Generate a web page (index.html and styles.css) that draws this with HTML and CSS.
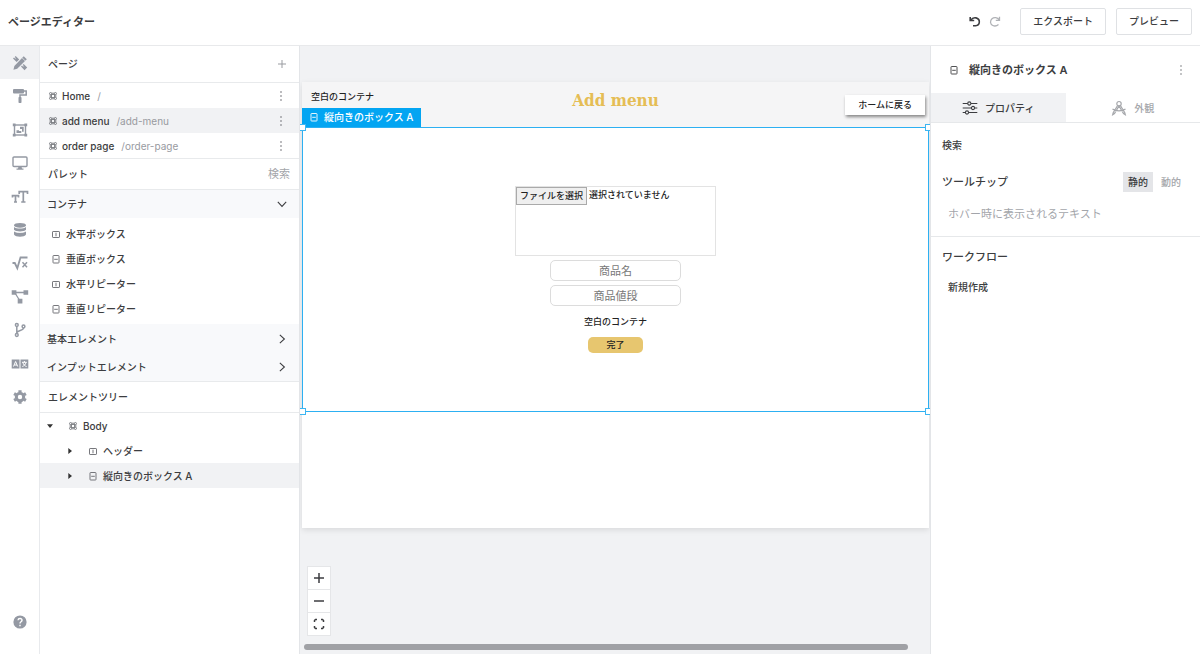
FILE: index.html
```html
<!DOCTYPE html>
<html lang="ja">
<head>
<meta charset="utf-8">
<title>ページエディター</title>
<link rel="stylesheet" href="styles.css">
</head>
<body>
<svg class="sprite" aria-hidden="true">
  <symbol id="i-page" viewBox="0 0 10 10"><g fill="none" stroke="currentColor" stroke-width=".8"><circle cx="2.600" cy="2.600" r="1.100"/><circle cx="7.400" cy="2.600" r="1.100"/><circle cx="2.600" cy="7.400" r="1.100"/><circle cx="7.400" cy="7.400" r="1.100"/><path d="M3.700 2.200h2.600M3.700 7.800h2.600M2.200 3.700v2.600M7.800 3.700v2.600M3.500 3.500h3v3h-3z"/></g></symbol>
  <symbol id="i-hbox" viewBox="0 0 10 10"><g fill="none" stroke="currentColor" stroke-width=".9"><rect x="1.500" y="2.500" width="7" height="6" rx=".6"/><path d="M5 3.700v3.600"/></g></symbol>
  <symbol id="i-vbox" viewBox="0 0 10 10"><g fill="none" stroke="currentColor" stroke-width=".9"><rect x="2" y="1.500" width="6" height="7.500" rx=".6"/><path d="M3.200 5.300h3.600"/></g></symbol>
  <symbol id="i-dots" viewBox="0 0 4 12"><g fill="currentColor"><circle cx="2" cy="2" r=".8"/><circle cx="2" cy="6" r=".8"/><circle cx="2" cy="10" r=".8"/></g></symbol>
  <symbol id="i-right" viewBox="0 0 10 10"><path d="M3.200 1.500L7 5 3.200 8.500" fill="none" stroke="currentColor" stroke-width=".9"/></symbol>
  <symbol id="i-down" viewBox="0 0 10 10"><path d="M1.500 3.200L5 7l3.500-3.800" fill="none" stroke="currentColor" stroke-width=".9"/></symbol>
</svg>

<header class="topbar">
  <h1 class="topbar-title">ページエディター</h1>
  <div class="history">
    <button class="plain undo" aria-label="元に戻す"><svg class="icon-12" viewBox="0 0 12 12"><path d="M1.200 1v3.500h4M1.800 4.200C3 2.200 5 1.600 7 1.900c4.500 1 4.500 7.300-.4 7.900H4" fill="none" stroke="currentColor" stroke-width="1.600"/></svg></button>
    <button class="plain redo" aria-label="やり直す"><svg class="icon-12" viewBox="0 0 12 12"><path d="M10.500 .8v3.500H6.800M10.300 4C8.500 1.200 5 1 3 2.800 .6 5 1.200 8.300 3.800 9.500c2 .9 4 .5 5.700-.9" fill="none" stroke="currentColor" stroke-width="1.300"/></svg></button>
  </div>
  <button class="outline">エクスポート</button>
  <button class="outline">プレビュー</button>
</header>

<div class="workspace">
  <nav class="rail">
    <div class="rail-list">
      <button class="plain rail-item active" aria-label="デザイン"><svg class="icon-16" viewBox="0 0 16 16" fill="currentColor"><path d="M11.700 1.200l3.100 3.100-9.600 9.500-3.800 1 1-3.900z"/><path d="M3.700 1l3.500 3.500-2.600 2.600L1 3.600l1-1 1.300 1.200.6-.6L2.700 2z"/><path d="M11.700 9l3.500 3.500-2.700 2.700L9 11.600l1-1 1.100 1.100.7-.7-1.100-1z"/><path d="M10 2.700l3.300 3.300" stroke="#f1f2f4" stroke-width=".7"/></svg></button>
      <button class="plain rail-item" aria-label="テーマ"><svg class="icon-16" viewBox="0 0 16 16"><rect x="1" y="1" width="11" height="4.500" rx="1" fill="currentColor"/><path d="M12 3h2.200v4H8v3" fill="none" stroke="currentColor" stroke-width="1.500"/><rect x="6.500" y="9" width="3" height="6" rx=".7" fill="currentColor"/></svg></button>
      <button class="plain rail-item" aria-label="コンポーネント"><svg class="icon-16" viewBox="0 0 16 16"><rect x="2.500" y="3" width="11" height="10" fill="none" stroke="currentColor" stroke-width="1.400"/><g fill="currentColor"><path d="M.8 1.500h2.800v2.800H.8zM12.400 1.500h2.800v2.800h-2.800zM.8 11.700h2.800v2.800H.8zM12.400 11.700h2.800v2.800h-2.800z"/><path d="M4.500 8.200V11h4.800V9H7V8.200zM8 4.800h3.700v5H10V7H8z"/></g></svg></button>
      <button class="plain rail-item" aria-label="画面"><svg class="icon-16" viewBox="0 0 16 16"><rect x="1" y="2" width="14" height="9.500" rx="1" fill="none" stroke="currentColor" stroke-width="1.400"/><path d="M6.500 11.500h3l.5 2h1.500v1.200h-7v-1.200H6z" fill="currentColor"/></svg></button>
      <button class="plain rail-item" aria-label="文字"><svg class="icon-18" viewBox="0 0 18 18"><path d="M1.500 9.500V7.700h6v1.800M4.500 8v6M3 14h3M8.200 6V3.600h8.300V6M12.300 4v10M10.200 14h4.300" fill="none" stroke="currentColor" stroke-width="1.700"/></svg></button>
      <button class="plain rail-item" aria-label="データベース"><svg class="icon-16" viewBox="0 0 16 16" fill="currentColor"><ellipse cx="8" cy="3.300" rx="6" ry="2.400"/><path d="M2 5c2.500 2 9.500 2 12 0v2.700c-1.500 2.300-10.500 2.300-12 0zM2 9c2.500 2 9.500 2 12 0v3.500c-1.500 3-10.500 3-12 0z"/><path d="M2 9c2.500 2 9.500 2 12 0" fill="none" stroke="#fff" stroke-width=".8"/></svg></button>
      <button class="plain rail-item" aria-label="数式"><svg class="icon-18" viewBox="0 0 18 18" fill="none" stroke="currentColor"><path d="M1.500 9h2.300l2.500 5.200L9.500 3.500h7" stroke-width="1.800"/><path d="M11.500 8.200l4.500 5M16 8.200l-4.500 5" stroke-width="1.500"/></svg></button>
      <button class="plain rail-item" aria-label="ワークフロー"><svg class="icon-18" viewBox="0 0 18 18"><path d="M3 4.500h12M4 5l5 8" fill="none" stroke="currentColor" stroke-width="1.300"/><path d="M.7 2.200h4.700v4.600H.7zM12.500 2.200h4.700v4.600h-4.700zM6.700 10.700h4.700v4.700H6.700z" fill="currentColor"/></svg></button>
      <button class="plain rail-item" aria-label="バージョン"><svg class="icon-16" viewBox="0 0 16 16" fill="none" stroke="currentColor" stroke-width="1.500"><circle cx="4.800" cy="3" r="1.400"/><circle cx="4.800" cy="13" r="1.400"/><circle cx="11.500" cy="4.500" r="1.400"/><path d="M4.800 4.500v7M11.500 6c0 3-6.500 2-6.700 5"/></svg></button>
      <button class="plain rail-item" aria-label="言語"><svg class="icon-18" viewBox="0 0 18 18"><path d="M.7 4.500h7.800v9H.7zM9.500 4.500h7.800v9H9.500z" fill="currentColor"/><path d="M2.500 11.500L4.600 6.500l2.100 5M3.300 10h2.700M11 7.300h4.800M13.400 6v1.300M15 7.500c-.5 2-2 3.500-3.700 4M11.900 7.500c.5 2 1.800 3.500 3.700 4" fill="none" stroke="#fff" stroke-width="1"/></svg></button>
      <button class="plain rail-item" aria-label="設定"><svg class="icon-16" viewBox="0 0 16 16"><circle cx="8" cy="8" r="3.700" fill="none" stroke="currentColor" stroke-width="3"/><path d="M8 1.200v2M8 12.800v2M2.100 4.600l1.800 1M12.100 10.400l1.800 1M2.100 11.400l1.800-1M12.100 5.600l1.800-1" stroke="currentColor" stroke-width="3.200"/></svg></button>
    </div>
    <button class="plain rail-help" aria-label="ヘルプ"><svg class="icon-16" viewBox="0 0 16 16"><circle cx="8" cy="8" r="6.600" fill="currentColor"/><path d="M6 6.300c.2-2.500 4.200-2.300 4 .1C9.900 7.800 8 7.700 8 9.500M8 10.700v1.500" fill="none" stroke="#fff" stroke-width="1.400"/></svg></button>
  </nav>

  <aside class="left">
    <div class="section-head tall"><h2>ページ</h2><button class="plain add" aria-label="追加"><svg class="icon-10" viewBox="0 0 10 10"><path d="M5 1v8M1 5h8" stroke="currentColor"/></svg></button></div>
    <ul class="list ruled">
      <li class="row page"><svg class="icon-10"><use href="#i-page"/></svg><span>Home</span><span class="path">/</span><button class="plain more" aria-label="メニュー"><svg class="dots"><use href="#i-dots"/></svg></button></li>
      <li class="row page selected"><svg class="icon-10"><use href="#i-page"/></svg><span>add menu</span><span class="path">/add-menu</span><button class="plain more" aria-label="メニュー"><svg class="dots"><use href="#i-dots"/></svg></button></li>
      <li class="row page"><svg class="icon-10"><use href="#i-page"/></svg><span>order page</span><span class="path">/order-page</span><button class="plain more" aria-label="メニュー"><svg class="dots"><use href="#i-dots"/></svg></button></li>
    </ul>
    <div class="section-head"><h2>パレット</h2><input class="search" type="text" placeholder="検索" aria-label="パレットを検索"></div>
    <button class="plain group">コンテナ<svg class="icon-12"><use href="#i-down"/></svg></button>
    <ul class="list palette">
      <li class="row"><svg class="icon-10"><use href="#i-hbox"/></svg><span>水平ボックス</span></li>
      <li class="row"><svg class="icon-10"><use href="#i-vbox"/></svg><span>垂直ボックス</span></li>
      <li class="row"><svg class="icon-10"><use href="#i-hbox"/></svg><span>水平リピーター</span></li>
      <li class="row"><svg class="icon-10"><use href="#i-vbox"/></svg><span>垂直リピーター</span></li>
    </ul>
    <div class="ruled groups">
      <button class="plain group">基本エレメント<svg class="icon-12"><use href="#i-right"/></svg></button>
      <button class="plain group">インプットエレメント<svg class="icon-12"><use href="#i-right"/></svg></button>
    </div>
    <div class="section-head"><h2>エレメントツリー</h2></div>
    <ul class="list">
      <li class="row node"><svg class="caret" viewBox="0 0 6 6"><path d="M0 1.300h6L3 5z" fill="currentColor"/></svg><svg class="icon-10"><use href="#i-page"/></svg><span>Body</span></li>
      <li class="row node child"><svg class="caret" viewBox="0 0 6 6"><path d="M1.300 0v6L5 3z" fill="currentColor"/></svg><svg class="icon-10"><use href="#i-hbox"/></svg><span>ヘッダー</span></li>
      <li class="row node child selected"><svg class="caret" viewBox="0 0 6 6"><path d="M1.300 0v6L5 3z" fill="currentColor"/></svg><svg class="icon-10"><use href="#i-vbox"/></svg><span>縦向きのボックス A</span></li>
    </ul>
  </aside>

  <main class="canvas">
    <div class="sheet">
      <div class="sheet-header">
        <span class="empty">空白のコンテナ</span>
        <h2 class="sheet-title">Add menu</h2>
        <button class="home">ホームに戻る</button>
      </div>
      <form class="stack">
        <label class="file"><input class="file-input" type="file"><span class="file-button">ファイルを選択</span><span>選択されていません</span></label>
        <input class="field" type="text" placeholder="商品名" aria-label="商品名">
        <input class="field" type="text" placeholder="商品値段" aria-label="商品値段">
        <span class="empty stack-empty">空白のコンテナ</span>
        <button class="done" type="button">完了</button>
        <div class="tag"><svg class="icon-10"><use href="#i-vbox"/></svg>縦向きのボックス A</div>
        <i class="handle tl"></i><i class="handle tr"></i><i class="handle bl"></i><i class="handle br"></i>
      </form>
    </div>
    <div class="zoom">
      <button class="plain" aria-label="拡大"><svg class="icon-12" viewBox="0 0 12 12"><path d="M6 1v10M1 6h10" stroke="currentColor" stroke-width="1.500"/></svg></button>
      <button class="plain" aria-label="縮小"><svg class="icon-12" viewBox="0 0 12 12"><path d="M1 6h10" stroke="currentColor" stroke-width="1.500"/></svg></button>
      <button class="plain" aria-label="全体表示"><svg class="icon-12" viewBox="0 0 12 12"><path d="M1.500 4V2.500l1-1H4M8 1.500h1.500l1 1V4M10.500 8v1.500l-1 1H8M4 10.500H2.500l-1-1V8" fill="none" stroke="currentColor" stroke-width="1.500"/></svg></button>
    </div>
    <div class="scrollbar"></div>
  </main>

  <aside class="right">
    <div class="element-head"><svg class="icon-10"><use href="#i-vbox"/></svg><h2>縦向きのボックス A</h2><button class="plain more" aria-label="メニュー"><svg class="dots"><use href="#i-dots"/></svg></button></div>
    <div class="tabs">
      <button class="plain tab current"><svg class="icon-16" viewBox="0 0 16 16" fill="none" stroke="currentColor" stroke-width="1.100"><path d="M.7 3.500h5M9 3.500h6.300M.7 8h8.800M12.700 8h2.600M.7 12.500h2.600M6.500 12.500h8.800"/><circle cx="7.300" cy="3.500" r="1.600"/><circle cx="11" cy="8" r="1.600"/><circle cx="5" cy="12.500" r="1.600"/></svg>プロパティ</button>
      <button class="plain tab"><svg class="icon-16" viewBox="0 0 16 16" fill="none" stroke="currentColor" stroke-width="1.200"><circle cx="8" cy="3.700" r="2.200"/><path d="M6.600 5.500L2.200 12.700l-.5 2 1.800-1.200L8 6l4.500 7.500 1.800 1.200-.5-2-4.400-7.200M1.500 9c3.500 2.500 9.500 2.500 13 0"/></svg>外観</button>
    </div>
    <div class="props">
      <h3 class="small">検索</h3>
      <div class="prop"><label for="tooltip">ツールチップ</label><div class="modes"><button class="plain mode on">静的</button><button class="plain mode">動的</button></div></div>
      <input class="tooltip" id="tooltip" type="text" placeholder="ホバー時に表示されるテキスト">
    </div>
    <div class="flows">
      <h3>ワークフロー</h3>
      <button class="plain create">新規作成</button>
    </div>
  </aside>
</div>
</body>
</html>
```
FILE: styles.css
```css
* { box-sizing: border-box; }

body {
  margin: 0;
  min-height: 100vh;
  display: flex;
  flex-direction: column;
  background: #fff;
  color: #3c3d40;
  font: 500 10px/16px Inter, "Noto Sans CJK JP", sans-serif;
}

h1, h2, h3, ul { margin: 0; padding: 0; font: inherit; }
button, input { font: inherit; color: inherit; }
input::placeholder { color: #a3a5aa; opacity: 1; }
svg { flex: none; display: block; }

.sprite { position: absolute; width: 0; height: 0; }
.plain { border: 0; padding: 0; background: none; }
.icon-10 { width: 10px; height: 10px; }
.icon-12 { width: 12px; height: 12px; }
.icon-16 { width: 16px; height: 16px; }
.icon-18 { width: 18px; height: 18px; }
.dots { width: 4px; height: 12px; color: #77797e; }

/* Top bar */
.topbar {
  display: flex;
  align-items: center;
  gap: 10px;
  padding: 8px 8px 10px;
  border-bottom: 1px solid #e8e9eb;
}
.topbar-title { margin-right: auto; font-size: 11px; font-weight: 700; }
.history { display: flex; gap: 8px; margin-right: 9px; }
.redo { color: #b0b2b6; }
.outline {
  padding: 4px 12px 5px;
  border: 1px solid #dfe1e4;
  border-radius: 2px;
  background: #fff;
}

.workspace {
  flex: 1;
  display: grid;
  grid-template-columns: 40px 260px minmax(0, 1fr) 270px;
}

/* Icon rail */
.rail {
  display: flex;
  flex-direction: column;
  justify-content: space-between;
  border-right: 1px solid #e8eaed;
  color: #9499a3;
}
.rail-list { display: flex; flex-direction: column; height: 368px; }
.rail-item { flex: 1; display: grid; place-items: center; }
.rail-item.active { background: #f1f2f4; }
.rail-help { display: grid; place-items: center; height: 64px; }

/* Left panel */
.left { border-right: 1px solid #e3e5e8; }
.section-head {
  display: flex;
  align-items: center;
  justify-content: space-between;
  min-height: 31px;
  padding: 0 9px 0 8px;
  border-bottom: 1px solid #e8eaec;
}
.section-head.tall { min-height: 37px; }
.add { padding-right: 3px; color: #999ba0; }
.search {
  width: 60px;
  padding: 0;
  border: 0;
  background: none;
  font-size: 11px;
  font-weight: 400;
  text-align: right;
}
.list { list-style: none; }
.ruled { border-bottom: 1px solid #e8eaec; }
.row {
  display: flex;
  align-items: center;
  gap: 5px;
  min-height: 25px;
  padding: 0 16px 0 8px;
}
.page { gap: 4px; }
.row svg { color: #66686d; }
.selected { background: #f1f2f4; }
.path { margin-left: 3px; color: #989a9f; font-weight: 400; }
.more { margin-left: auto; }
.group {
  display: flex;
  align-items: center;
  justify-content: space-between;
  width: 100%;
  min-height: 28px;
  padding: 0 11px 0 7px;
  background: #f8f9fb;
}
.groups { padding-top: 1px; background: #f8f9fb; }
.palette { padding: 3px 0; }
.palette .row { padding-left: 11px; }
.node { padding-left: 7px; }
.node .caret { width: 6px; height: 6px; margin-right: 10px; color: #333; }
.child { padding-left: 27px; }

/* Canvas */
.canvas { position: relative; overflow: hidden; padding: 36px 1px 0 2px; background: #f1f2f4; }
.sheet { min-height: 446px; background: #fff; box-shadow: 0 2px 6px rgba(0, 0, 0, .1); }
.sheet-header {
  display: grid;
  grid-template-columns: 1fr auto 1fr;
  min-height: 45px;
  padding: 6px 4px 0;
  background: #f5f5f6;
}
.empty { font-size: 9px; color: #222; }
.sheet-header .empty { padding: 1px 5px; }
.sheet-title {
  color: #e5bd55;
  font: 700 17px/24px "DejaVu Serif Condensed", "DejaVu Serif", serif;
}
.home {
  justify-self: end;
  align-self: start;
  margin-top: 7px;
  padding: 2px 13px;
  border: 0;
  background: #fff;
  box-shadow: 1px 2px 3px rgba(0, 0, 0, .45);
  color: #222;
  font-size: 9px;
}
.stack {
  position: relative;
  display: flex;
  flex-direction: column;
  align-items: center;
  gap: 4px;
  min-height: 284px;
  padding: 58px 0;
  border: 1px solid #2db0f2;
}
.file {
  display: flex;
  align-items: flex-start;
  gap: 2px;
  width: 201px;
  min-height: 70px;
  border: 1px solid #e3e3e3;
  color: #222;
  font-size: 9px;
}
.file-input { position: absolute; width: 1px; height: 1px; opacity: 0; }
.file-button { padding: 0 3px; border: 1px solid #aaa; background: #efefef; }
.field {
  width: 131px;
  height: 21px;
  padding: 2px 8px;
  border: 1px solid #dcdcdc;
  border-radius: 5px;
  font-size: 11px;
  font-weight: 400;
  text-align: center;
}
.field::placeholder { color: #777; }
.stack-empty { padding: 4px 0 3px; }
.done {
  width: 55px;
  padding: 0;
  border: 0;
  border-radius: 5px;
  background: #e7c66f;
  color: #222;
  font-size: 9px;
}
.tag {
  position: absolute;
  bottom: 100%;
  left: -1px;
  display: flex;
  align-items: center;
  gap: 5px;
  margin-bottom: 1px;
  padding: 1px 8px 2px 7px;
  background: #03a5f2;
  color: #fff;
}
.handle { position: absolute; width: 7px; height: 7px; border: 1px solid #3db6f2; background: #fff; }
.tl { top: -4px; left: -4px; }
.tr { top: -4px; right: -4px; }
.bl { bottom: -4px; left: -4px; }
.br { bottom: -4px; right: -4px; }
.zoom {
  position: absolute;
  bottom: 18px;
  left: 7px;
  display: grid;
  gap: 1px;
  border: 1px solid #e5e6e8;
  background: #e5e6e8;
}
.zoom button { display: grid; place-items: center; width: 22px; height: 22px; background: #fff; }
.scrollbar {
  position: absolute;
  bottom: 4px;
  left: 4px;
  right: 22px;
  height: 6px;
  border-radius: 3px;
  background: #a0a1a5;
}

/* Right panel */
.right { border-left: 1px solid #e3e5e8; }
.element-head { display: flex; align-items: center; gap: 10px; min-height: 47px; padding: 0 17px 0 18px; }
.element-head h2 { font-size: 11px; font-weight: 600; }
.tabs { display: grid; grid-template-columns: 1fr 1fr; border-bottom: 1px solid #e6e8ea; }
.tab {
  display: flex;
  align-items: center;
  justify-content: center;
  gap: 7px;
  min-height: 29px;
  color: #a5a7ab;
}
.tab.current { background: #f1f2f4; color: #3c3d40; }
.props { padding: 14px 11px 14px; border-bottom: 1px solid #e6e8ea; }
.right h3, .right label { font-size: 11px; }
.right .small { font-size: 10px; }
.prop { display: flex; align-items: center; justify-content: space-between; margin-top: 19px; }
.modes { display: flex; padding-right: 3px; }
.mode { padding: 2px 5px; color: #a5a7ab; }
.mode.on { margin-right: 3px; background: #e4e5e8; color: #3c3d40; }
.tooltip { width: 100%; margin-top: 14px; padding: 0 6px; border: 0; font-size: 11px; font-weight: 400; }
.flows { padding: 12px 11px; }
.create { margin: 14px 0 0 6px; }
```
